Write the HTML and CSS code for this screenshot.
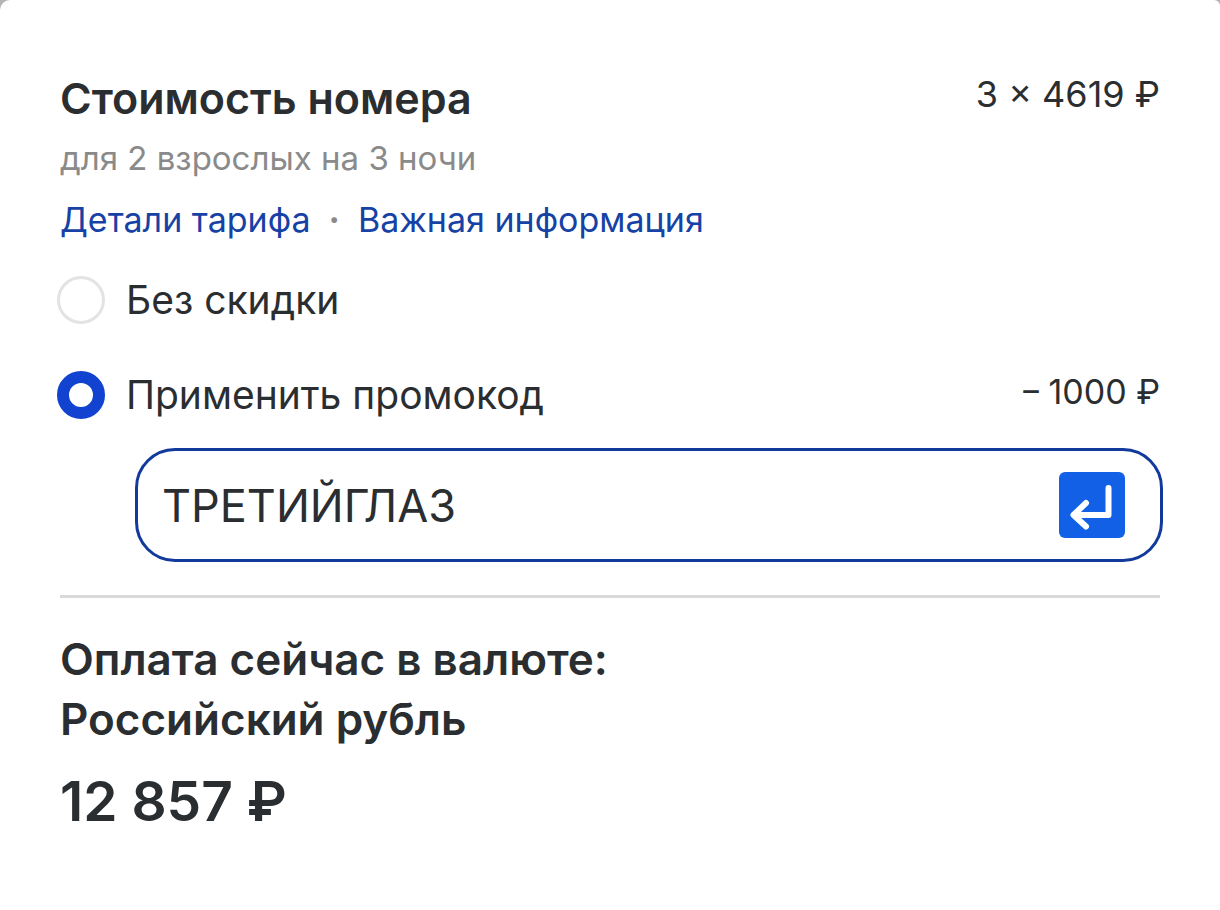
FILE: index.html
```html
<!DOCTYPE html>
<html lang="ru">
<head>
    <meta charset="UTF-8">
    <meta name="viewport" content="width=device-width, initial-scale=1.0">
    <title>Стоимость номера</title>
    <link rel="stylesheet" href="styles.css">
</head>
<body>
    <main class="card">
        <div class="row">
            <h1>Стоимость номера</h1>
            <span class="price">3 × 4619 ₽</span>
        </div>
        <p class="guests">для 2 взрослых на 3 ночи</p>
        <nav class="links">
            <a href="#tariff">Детали тарифа</a>
            <span class="dot">·</span>
            <a href="#info">Важная информация</a>
        </nav>

        <form class="discount">
            <div class="option">
                <input type="radio" name="discount" id="noDiscount">
                <label for="noDiscount">Без скидки</label>
            </div>
            <div class="option">
                <input type="radio" name="discount" id="promo" checked>
                <label for="promo">Применить промокод</label>
                <span class="amount">−&thinsp;1000 ₽</span>
            </div>
            <div class="promo-field">
                <input type="text" id="promoCode" aria-label="Промокод" value="ТРЕТИЙГЛАЗ">
                <button type="submit" aria-label="Применить">
                    <svg viewBox="0 0 66 66" fill="none" stroke="#fff" stroke-width="6" stroke-linecap="round" stroke-linejoin="round">
                        <path d="M49.5 16V43H15M27 31L14.5 43L27 54.5"/>
                    </svg>
                </button>
            </div>
        </form>

        <section class="total">
            <h2>Оплата сейчас в валюте:<br>Российский рубль</h2>
            <p class="sum">12 857 ₽</p>
        </section>
    </main>
</body>
</html>
```
FILE: styles.css
```css
* {
    box-sizing: border-box;
}
body {
    margin: 0;
    background-color: #b4b4b4;
    font-family: Inter, "Noto Sans", sans-serif;
    color: #2b2e31;
}
.card {
    min-height: 100vh;
    padding: 68px 60px 60px;
    background-color: #fff;
    border-radius: 10px 6px 0 0;
}
h1, h2, p {
    margin: 0;
}
h1, h2 {
    font-size: 44px;
    line-height: 60px;
    font-weight: 600;
}
h1 {
    font-size: 43px;
}
.row {
    display: flex;
    justify-content: space-between;
}
.price {
    font-size: 36px;
    line-height: 52px;
}
.guests {
    font-size: 33px;
    line-height: 60px;
    color: #8a8a8a;
}
.links {
    display: flex;
    gap: 18px;
    font-size: 34px;
    line-height: 64px;
}
.links a {
    color: #1742a5;
    text-decoration: none;
}
.dot {
    font-weight: 700;
    color: #8a8a8a;
}
.option {
    display: flex;
    align-items: center;
    height: 95px;
    margin-left: -3px;
    font-size: 39px;
}
.option input {
    appearance: none;
    width: 48px;
    height: 48px;
    margin: 0 21px 0 0;
    border: 3px solid #e3e3e3;
    border-radius: 50%;
}
.option input:checked {
    border: 12px solid #1242d0;
}
.amount {
    margin-left: auto;
    padding-bottom: 6px;
    font-size: 34px;
}
.promo-field {
    display: flex;
    align-items: center;
    height: 114px;
    margin: 6px -3px 0 75px;
    padding: 0 35px 0 24px;
    border: 3px solid #123a9c;
    border-radius: 40px;
}
.promo-field input {
    flex: 1;
    min-width: 0;
    padding: 0;
    border: 0;
    outline: 0;
    font: inherit;
    font-size: 45px;
    color: inherit;
}
.promo-field button {
    width: 66px;
    height: 66px;
    padding: 0;
    border: 0;
    border-radius: 6px;
    background-color: #1160e6;
}
.promo-field svg {
    display: block;
}
.total {
    margin-top: 33px;
    padding-top: 31px;
    border-top: 3px solid #d8d9da;
}
.sum {
    margin-top: 16px;
    font-size: 55px;
    line-height: 72px;
    font-weight: 600;
}
```
